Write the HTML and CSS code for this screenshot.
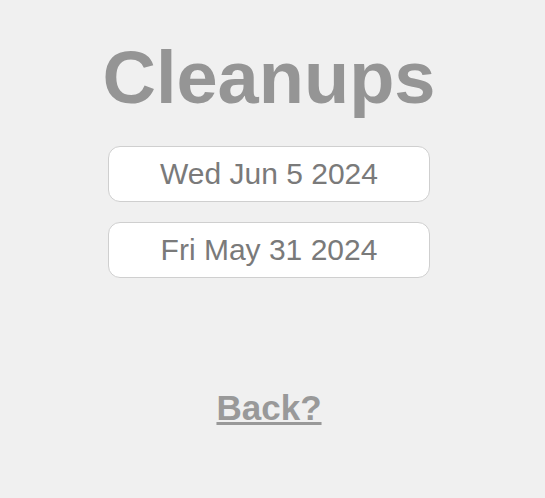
FILE: index.html
```html
<!DOCTYPE html>
<html>
<head>
<meta charset="utf-8">
<link rel="stylesheet" href="styles.css">
</head>
<body>
<main class="page">
  <h1 class="title">Cleanups</h1>
  <div class="dates">
    <div class="date">Wed Jun 5 2024</div>
    <div class="date">Fri May 31 2024</div>
  </div>
  <a class="back" href="#">Back?</a>
</main>
</body>
</html>
```
FILE: styles.css
```css
html, body {
  margin: 0;
  padding: 0;
  background: #f0f0f0;
}
body {
  font-family: "Liberation Sans", Arial, sans-serif;
}
.page {
  display: flex;
  flex-direction: column;
  align-items: center;
  padding: 33px 7px 0 0;
}
.title {
  margin: 0;
  font-size: 74px;
  font-weight: bold;
  color: #959595;
  line-height: 90px;
}
.dates {
  display: flex;
  flex-direction: column;
  gap: 20px;
  margin-top: 23px;
}
.date {
  box-sizing: border-box;
  width: 322px;
  height: 56px;
  background: #fff;
  border: 1px solid #cfcfcf;
  border-radius: 12px;
  display: flex;
  align-items: center;
  justify-content: center;
  font-size: 30px;
  color: #7a7a7a;
}
.back {
  margin-top: 110px;
  font-size: 35px;
  font-weight: bold;
  color: #999;
  text-decoration: underline;
}
```
